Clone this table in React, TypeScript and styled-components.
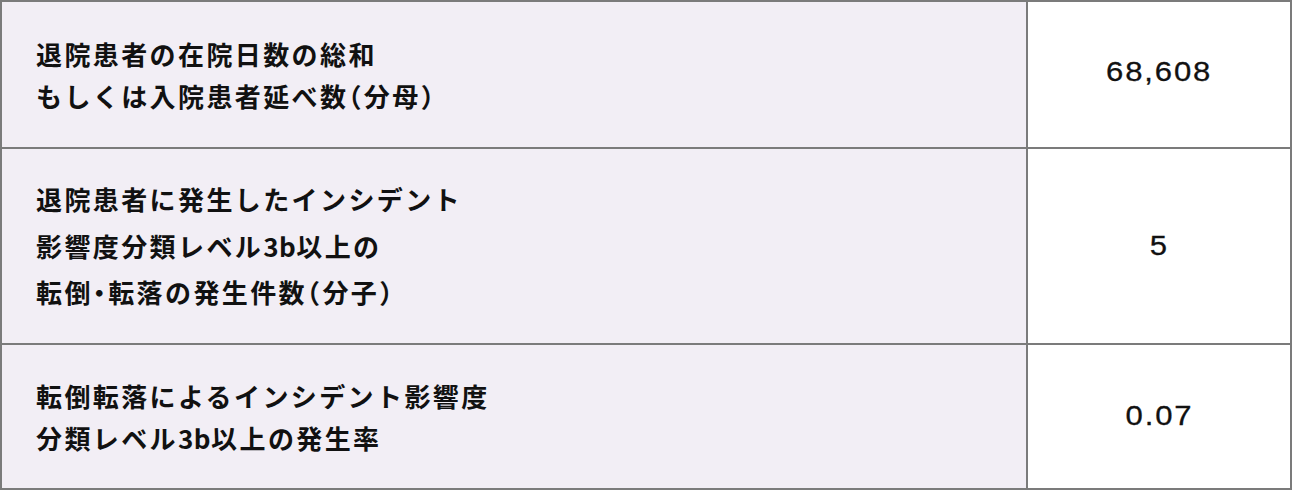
import React from "react";
import styled, { createGlobalStyle } from "styled-components";

const GlobalStyle = createGlobalStyle`
  html, body {
    margin: 0;
    padding: 0;
    background: #fff;
  }
  body {
    font-family: "Noto Sans CJK JP", "Noto Sans", sans-serif;
    color: #111;
  }
`;

const TableStyled = styled.div`
  display: grid;
  grid-template-columns: 1024px 262px;
  grid-template-rows: 145px 194px 143px;
  gap: 2px;
  padding: 2px;
  width: 1292px;
  height: 490px;
  box-sizing: border-box;
  background-color: #7b7b7b;
`;

const LabelCellStyled = styled.div<{ $lh: number }>`
  display: flex;
  flex-direction: column;
  justify-content: center;
  padding: 0 0 0 34px;
  background-color: #f2eef5;
  font-size: 26px;
  font-weight: 700;
  letter-spacing: 2.4px;
  line-height: ${(p) => p.$lh}px;
  white-space: nowrap;
`;

// 約物（括弧・中黒）は半角幅で詰める
const PunctStyled = styled.span`
  font-feature-settings: "halt";
`;

// 英数字は字間を詰める
const LatinStyled = styled.span`
  letter-spacing: 0.5px;
`;

const ValueCellStyled = styled.div`
  display: flex;
  align-items: center;
  justify-content: center;
  background-color: #fff;
`;

// 数字は幅広の書体に見せるため横に伸ばす
const NumberStyled = styled.span<{ $dy: number }>`
  display: inline-block;
  font-family: "Liberation Sans", Arial, sans-serif;
  font-size: 27px;
  line-height: 1;
  letter-spacing: 1.6px;
  color: #111;
  transform: translateY(${(p) => p.$dy}px) scaleX(1.15);
  -webkit-text-stroke: 0.3px #111;
`;

interface RowTypes {
  lines: string[];
  value: string;
  lh: number;
  dy: number;
}

const rows: RowTypes[] = [
  {
    lines: ["退院患者の在院日数の総和", "もしくは入院患者延べ数（分母）"],
    value: "68,608",
    lh: 42,
    dy: -2,
  },
  {
    lines: [
      "退院患者に発生したインシデント",
      "影響度分類レベル3b以上の",
      "転倒・転落の発生件数（分子）",
    ],
    value: "5",
    lh: 46.5,
    dy: 0,
  },
  {
    lines: ["転倒転落によるインシデント影響度", "分類レベル3b以上の発生率"],
    value: "0.07",
    lh: 42,
    dy: 0,
  },
];

const renderLine = (line: string) =>
  line.split(/([（）・]|3b)/).map((part, i) => {
    if (/^[（）・]$/.test(part)) return <PunctStyled key={i}>{part}</PunctStyled>;
    if (part === "3b") return <LatinStyled key={i}>{part}</LatinStyled>;
    return part;
  });

const App: React.FC = () => {
  return (
    <>
      <GlobalStyle />
      <TableStyled>
        {rows.map((row, index) => (
          <React.Fragment key={index}>
            <LabelCellStyled $lh={row.lh}>
              {row.lines.map((line, i) => (
                <div key={i}>{renderLine(line)}</div>
              ))}
            </LabelCellStyled>
            <ValueCellStyled>
              <NumberStyled $dy={row.dy}>{row.value}</NumberStyled>
            </ValueCellStyled>
          </React.Fragment>
        ))}
      </TableStyled>
    </>
  );
};

export default App;
